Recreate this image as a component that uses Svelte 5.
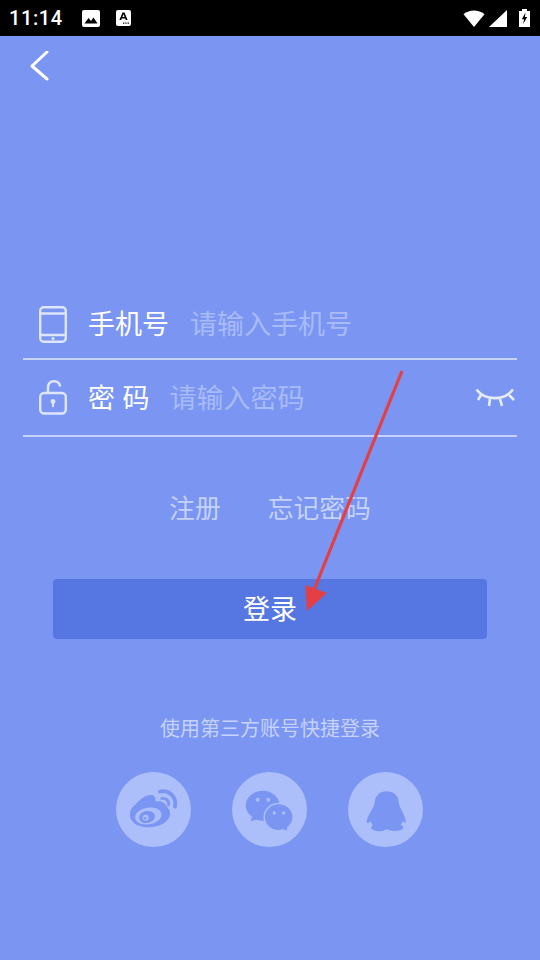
<script>
  const socials = ['weibo', 'wechat', 'qq']
</script>

<div class="page">
  <div class="status">
    <span class="time">11:14</span>
    <svg class="note" width="18" height="17" viewBox="0 0 18 17">
      <rect x="0" y="0" width="18" height="17" rx="2" fill="#fff" />
      <path d="M2.5 13.5 L6.5 8 L9 11 L11.5 7.5 L15.5 13.5 Z" fill="#000" />
    </svg>
    <svg class="note" width="15" height="16" viewBox="0 0 15 16">
      <rect x="0" y="0" width="15" height="16" rx="2" fill="#fff" />
      <path d="M3.4 10 L6.5 2.5 L8.5 2.5 L11.6 10 L9.8 10 L9.2 8.4 L5.8 8.4 L5.2 10 Z M6.4 6.9 L8.6 6.9 L7.5 4.2 Z" fill="#000" fill-rule="evenodd" />
      <path d="M7 12.5 h1.3 v1.3 h-1.3 z M9.3 12.5 h1.3 v1.3 h-1.3 z M11.6 12.5 h1.3 v1.3 h-1.3 z" fill="#000" />
    </svg>
    <span class="spacer"></span>
    <svg width="22" height="17" viewBox="0 0 22 17">
      <path d="M0.5 4.2 C6.5 -0.8 15.5 -0.8 21.5 4.2 L11 17 Z" fill="#fff" />
    </svg>
    <svg class="signal" width="18" height="17" viewBox="0 0 18 17">
      <path d="M0 17 L18 0 V17 Z" fill="#fff" />
    </svg>
    <svg class="battery" width="11" height="18" viewBox="0 0 11 18">
      <path d="M3 0 H8 V2 H11 V18 H0 V2 H3 Z" fill="#fff" />
      <path d="M6.5 3.5 L2.8 10.3 H5 L4.2 15 L8.2 8 H5.9 Z" fill="#000" />
    </svg>
  </div>

  <header class="top">
    <svg width="20" height="30" viewBox="0 0 20 30">
      <path d="M18 2 L3 16 L18 29" fill="none" stroke="#fff" stroke-width="3" stroke-linecap="round" stroke-linejoin="round" transform="translate(0 -1)" />
    </svg>
  </header>

  <form class="form" on:submit|preventDefault>
    <div class="row row-phone">
      <svg class="icon" width="28" height="37" viewBox="0 0 28 37" fill="none" stroke="#dfe5fb" stroke-width="2.4">
        <rect x="1.2" y="1.2" width="25.6" height="34.6" rx="3.5" />
        <path d="M1.2 7.5 H26.8 M1.2 29 H26.8" />
        <circle cx="14" cy="32.5" r="1.6" fill="#dfe5fb" stroke="none" />
      </svg>
      <label class="label" for="phone">手机号</label>
      <input id="phone" placeholder="请输入手机号" />
    </div>
    <div class="row row-pass">
      <svg class="icon" width="28" height="36" viewBox="0 0 28 36" fill="none" stroke="#dfe5fb" stroke-width="2.4">
        <path d="M9 13 V8 C9 3.5 11.5 1.2 15 1.2 C18.5 1.2 20.6 3 21.2 6.5" />
        <rect x="1.2" y="13" width="25.6" height="20.5" rx="4" />
        <circle cx="14" cy="21.5" r="2.4" fill="#dfe5fb" stroke="none" />
        <path d="M14 22 V27" stroke-width="2" />
      </svg>
      <label class="label spaced" for="pass">密码</label>
      <input id="pass" placeholder="请输入密码" />
      <svg class="eye" width="40" height="20" viewBox="0 0 40 20" fill="none" stroke="#e8ecf6" stroke-width="2.6">
        <path d="M1.5 1.5 C10 13 29 13 38 1.5" />
        <path d="M6 7 L3 12 M15 11 L14 18 M25 11 L27 18 M34 7 L39 12" />
      </svg>
    </div>

    <div class="links">
      <span>注册</span>
      <span>忘记密码</span>
    </div>

    <button class="login" type="submit">登录</button>
  </form>

  <p class="third">使用第三方账号快捷登录</p>

  <div class="socials">
    {#each socials as s}
      <div class="social">
        <svg width="75" height="75" viewBox="0 0 75 75">
          {#if s === 'weibo'}
            <path fill="#7a96f2" d="M14 43 C14 38 16 35 19 33 C24 27 30 23 34 23 C38 22.5 40 25 39.5 29.5 C44 28.5 49 30 51.5 35.5 C54 38 54.5 41 54 43 C52.5 50 44 55.3 32.3 55.3 C21 55.3 14 50 14 43 Z" />
            <ellipse cx="32.3" cy="44" rx="13.3" ry="8.3" transform="rotate(-10 32.3 44)" fill="#adbffa" />
            <ellipse cx="31" cy="45" rx="8" ry="6" transform="rotate(-10 31 45)" fill="#7a96f2" />
            <circle cx="29.7" cy="45.7" r="3" fill="#adbffa" />
            <circle cx="29" cy="46.3" r="1.2" fill="#7a96f2" />
            <path d="M44 19.5 C53 17.5 61 25 59 34.5" fill="none" stroke="#7a96f2" stroke-width="3.8" stroke-linecap="round" />
            <path d="M45.7 26.5 C50 25.5 53.5 29 52.5 33" fill="none" stroke="#7a96f2" stroke-width="2.8" stroke-linecap="round" />
          {:else if s === 'wechat'}
            <path fill="#7a96f2" d="M30.7 18.7 C40 18.7 47.7 25 47.7 33.7 C47.7 42 40 48.7 30.7 48.7 C28.5 48.7 26.5 48.3 24.5 47.7 L18.7 49.5 L20 44.5 C16 41.5 13.7 38 13.7 33.7 C13.7 25 21.5 18.7 30.7 18.7 Z" />
            <path fill="#7a96f2" stroke="#adbffa" stroke-width="1.5" d="M46.7 31.5 C54.5 31.5 61.2 37.5 61.2 45.3 C61.2 49.5 59 53 56 55.3 L55.5 59.5 L50.5 58 C49.5 58.5 48 58.8 46.7 58.8 C38.7 58.8 32.2 52.8 32.2 45.3 C32.2 37.5 38.7 31.5 46.7 31.5 Z" />
            <circle cx="25.7" cy="27.7" r="2" fill="#adbffa" />
            <circle cx="36.3" cy="27.7" r="2" fill="#adbffa" />
            <circle cx="42.3" cy="41" r="1.7" fill="#adbffa" />
            <circle cx="51.7" cy="41" r="1.7" fill="#adbffa" />
          {:else}
            <path fill="#7a96f2" d="M38.7 19.3 C46 19.3 50 24 50.5 29 C51 34 53 36.5 55 41 C56.5 44.5 58 47.5 57.7 50 C57.5 51.5 56.5 51 55 49 C54.5 50.5 53.5 52 52.5 53 C55 53.5 55.8 55 55 56.5 C53.5 58.5 47.5 59.5 42.5 58.5 C40.5 58 39.5 57.5 38.7 57.5 C37.5 57.5 36.5 58.5 34 59 C30 59.8 25 59 23.5 56.8 C22.7 55 23.8 53.5 25 53 C23.8 52 22.8 50.5 22.3 49 C20.5 51.5 19 51.5 18.7 50 C18.5 47.5 20 44.5 22 41 C24 37.5 26.5 34 27 29 C27.5 24 31.5 19.3 38.7 19.3 Z" />
          {/if}
        </svg>
      </div>
    {/each}
  </div>

  <svg class="arrow" width="120" height="250" viewBox="0 0 120 250">
    <path d="M98 1 L10 220" stroke="#e43f44" stroke-width="3.2" fill="none" />
    <path d="M3 241 L1.5 215 L23 223 Z" fill="#e43f44" />
  </svg>
</div>

<style>
  :global(body) {
    margin: 0;
  }

  .page {
    position: relative;
    width: 540px;
    height: 960px;
    background: #7a96f2;
    overflow: hidden;
    font-family: 'Noto Sans CJK SC', sans-serif;
    color: #fff;
  }

  .status {
    display: flex;
    align-items: center;
    height: 36px;
    padding: 0 10px 0 9px;
    background: #000;
    box-sizing: border-box;
  }

  .time {
    font-family: Roboto, sans-serif;
    font-size: 20px;
    font-weight: 500;
    letter-spacing: 0.6px;
    width: 73px;
  }

  .note {
    margin-right: 16px;
  }

  .spacer {
    flex: 1;
  }

  .signal {
    margin-left: 4px;
    margin-right: 12px;
  }

  .top {
    height: 60px;
    padding-left: 29px;
    display: flex;
    align-items: center;
  }

  .form {
    margin: 188px 23px 0;
    display: flex;
    flex-direction: column;
  }

  .row {
    display: flex;
    align-items: center;
    border-bottom: 2px solid #c6d2f9;
    box-sizing: border-box;
    padding-left: 16px;
  }

  .row-phone {
    height: 76px;
    padding-top: 2px;
  }

  .row-pass {
    height: 77px;
    padding-bottom: 3px;
  }

  .icon {
    margin-top: 4px;
  }

  .label {
    font-size: 27px;
    margin-left: 21px;
    white-space: nowrap;
  }

  .spaced {
    letter-spacing: 7.5px;
    margin-right: -7.5px;
  }

  input {
    flex: 1;
    min-width: 0;
    border: none;
    outline: none;
    background: none;
    font: inherit;
    font-size: 27px;
    color: #fff;
    margin-left: 21px;
    padding: 0;
  }

  #pass {
    margin-left: 20px;
  }

  input::placeholder {
    color: #a9bbf7;
    opacity: 1;
  }

  .eye {
    margin-right: 2px;
    margin-top: 4px;
  }

  .links {
    display: flex;
    justify-content: center;
    gap: 47px;
    margin-top: 50px;
    font-size: 25.8px;
    line-height: 40px;
    color: #c6d2f9;
  }

  .login {
    margin: 52px 30px 0;
    height: 60px;
    padding: 0 0 3px;
    border: none;
    border-radius: 4px;
    background: #5677e2;
    color: #fff;
    font: inherit;
    font-size: 27px;
  }

  .third {
    margin: 72px 0 0;
    text-align: center;
    font-size: 20px;
    line-height: 34px;
    color: #c6d2f9;
  }

  .socials {
    display: flex;
    justify-content: center;
    gap: 41px;
    margin: 27px 1px 0 0;
  }

  .social {
    width: 75px;
    height: 75px;
    border-radius: 50%;
    background: #adbffa;
  }

  .arrow {
    position: absolute;
    left: 304px;
    top: 370px;
  }
</style>
